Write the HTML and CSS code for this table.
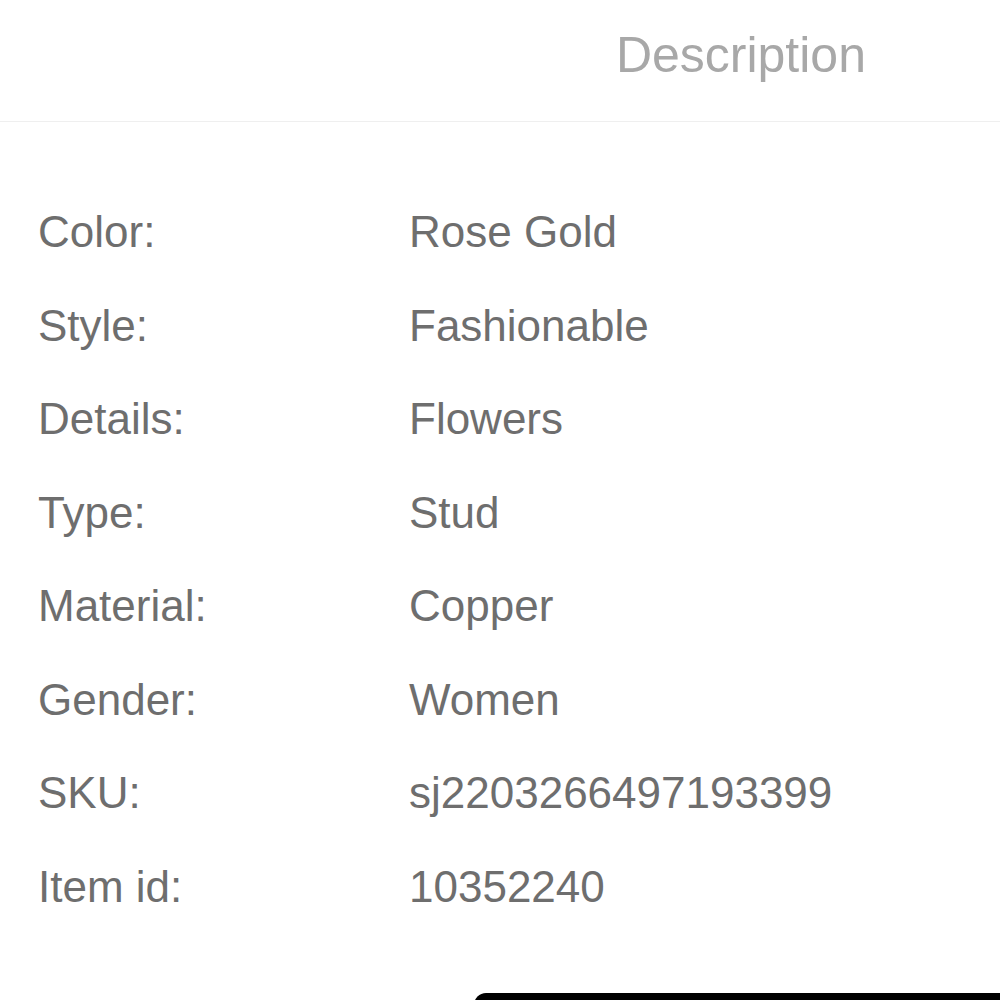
FILE: index.html
```html
<!DOCTYPE html>
<html lang="en">

<head>
  <meta charset="UTF-8" />
  <meta name="viewport" content="width=device-width, initial-scale=1.0" />
  <title>Description</title>
  <link rel="stylesheet" href="styles.css">
</head>

<body>
  <div class="page">
    <div class="tabs">
      <span class="tab">Description</span>
    </div>
    <dl class="specs">
      <dt>Color:</dt>
      <dd>Rose Gold</dd>
      <dt>Style:</dt>
      <dd>Fashionable</dd>
      <dt>Details:</dt>
      <dd>Flowers</dd>
      <dt>Type:</dt>
      <dd>Stud</dd>
      <dt>Material:</dt>
      <dd>Copper</dd>
      <dt>Gender:</dt>
      <dd>Women</dd>
      <dt>SKU:</dt>
      <dd>sj2203266497193399</dd>
      <dt>Item id:</dt>
      <dd>10352240</dd>
    </dl>
    <div class="bottom-bar"></div>
  </div>
</body>

</html>
```

FILE: styles.css
```css
* {
  box-sizing: border-box;
}

body {
  margin: 0;
  background: #fff;
  font-family: "Liberation Sans", Arial, sans-serif;
}

.page {
  position: relative;
  width: 1000px;
  height: 1000px;
  overflow: hidden;
}

.tabs {
  height: 122px;
  padding: 25px 134px 0 0;
  border-bottom: 1px solid #efefef;
  display: flex;
  justify-content: flex-end;
}

.tab {
  font-size: 50px;
  line-height: 60px;
  color: #a8a8a8;
}

.specs {
  margin: 0;
  padding: 63px 0 0 38px;
  display: grid;
  grid-template-columns: 371px 1fr;
  grid-auto-rows: 93.5px;
  font-size: 44px;
  line-height: 93.5px;
  color: #6e6e6e;
}

.specs dt,
.specs dd {
  margin: 0;
  white-space: nowrap;
}

.bottom-bar {
  position: absolute;
  left: 474px;
  right: 0;
  top: 993px;
  height: 40px;
  background: #000;
  border-top-left-radius: 12px;
}
```
